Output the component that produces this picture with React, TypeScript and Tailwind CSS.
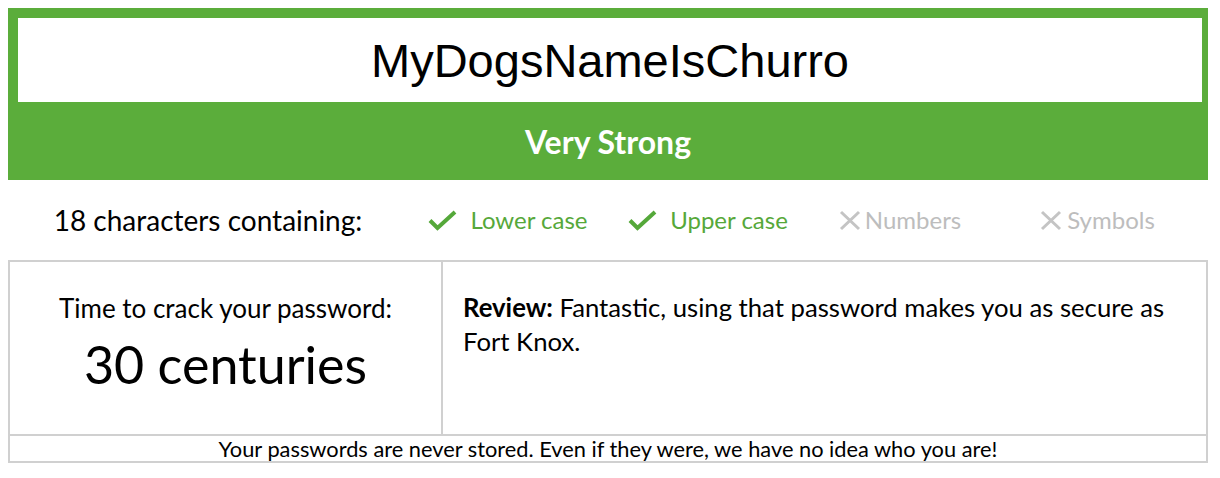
import React from "react";

function Check() {
  return (
    <svg width="30" height="22" viewBox="0 0 30 22" className="shrink-0" style={{ filter: "blur(0.4px)" }}>
      <path d="M2 11.5 L9.5 19 L27 3" fill="none" stroke="#55a83a" strokeWidth="4" strokeLinecap="butt" strokeLinejoin="miter" />
    </svg>
  );
}

function Cross() {
  return (
    <svg width="22" height="22" viewBox="0 0 22 22" className="shrink-0" style={{ filter: "blur(0.5px)" }}>
      <path d="M2 3 L20 20 M20 3 L2 20" fill="none" stroke="#c4c4c4" strokeWidth="3" />
    </svg>
  );
}

export default function App() {
  return (
    <div className="p-2 bg-white" style={{ fontFamily: "Lato, 'Noto Sans', sans-serif" }}>
      <div className="w-[1200px] bg-[#5bad3b]">
        <div className="pt-[10px] pl-[10px] pr-[6px]">
          <div className="h-[84px] bg-white flex items-center justify-center">
            <span className="text-[47px] text-black leading-none" style={{ fontFamily: "'Liberation Sans', Arial, sans-serif" }}>
              MyDogsNameIsChurro
            </span>
          </div>
        </div>
        <div className="h-[78px] flex items-center justify-center pt-[2px]">
          <span className="text-white font-bold text-[32px] leading-none">Very Strong</span>
        </div>
      </div>

      <div className="w-[1200px] h-[80px] grid grid-cols-[400px_200px_200px_200px_200px] items-center">
        <div className="flex justify-center text-[28px] leading-none text-black">18 characters containing:</div>
        <div className="flex justify-center items-center gap-[12px] text-[24px] leading-none text-[#56a83a]">
          <Check />
          <span>Lower case</span>
        </div>
        <div className="flex justify-center items-center gap-[12px] text-[24px] leading-none text-[#56a83a]">
          <Check />
          <span>Upper case</span>
        </div>
        <div className="flex justify-center items-center gap-[4px] pr-[16px] text-[24px] leading-none text-[#bdbdbd]">
          <Cross />
          <span>Numbers</span>
        </div>
        <div className="flex justify-center items-center gap-[5px] pr-[21px] text-[24px] leading-none text-[#bdbdbd]">
          <Cross />
          <span>Symbols</span>
        </div>
      </div>

      <div className="w-[1200px] border-2 border-[#d0d0d0]">
        <div className="flex h-[172px]">
          <div className="w-[433px] border-r-2 border-[#d0d0d0] flex flex-col items-center pt-[30px] text-black">
            <div className="text-[26px] leading-[32px]">Time to crack your password:</div>
            <div className="text-[52px] leading-[60px] mt-[10px]">30 centuries</div>
          </div>
          <div className="flex-1 pl-[20px] pr-[20px] pt-[28px] text-[25.7px] leading-[34px] text-black">
            <span className="font-bold">Review:</span> Fantastic, using that password makes you as secure as Fort Knox.
          </div>
        </div>
        <div className="h-[27px] border-t-2 border-[#d0d0d0] flex items-center justify-center text-[21.8px] leading-none text-black">
          Your passwords are never stored. Even if they were, we have no idea who you are!
        </div>
      </div>
    </div>
  );
}
